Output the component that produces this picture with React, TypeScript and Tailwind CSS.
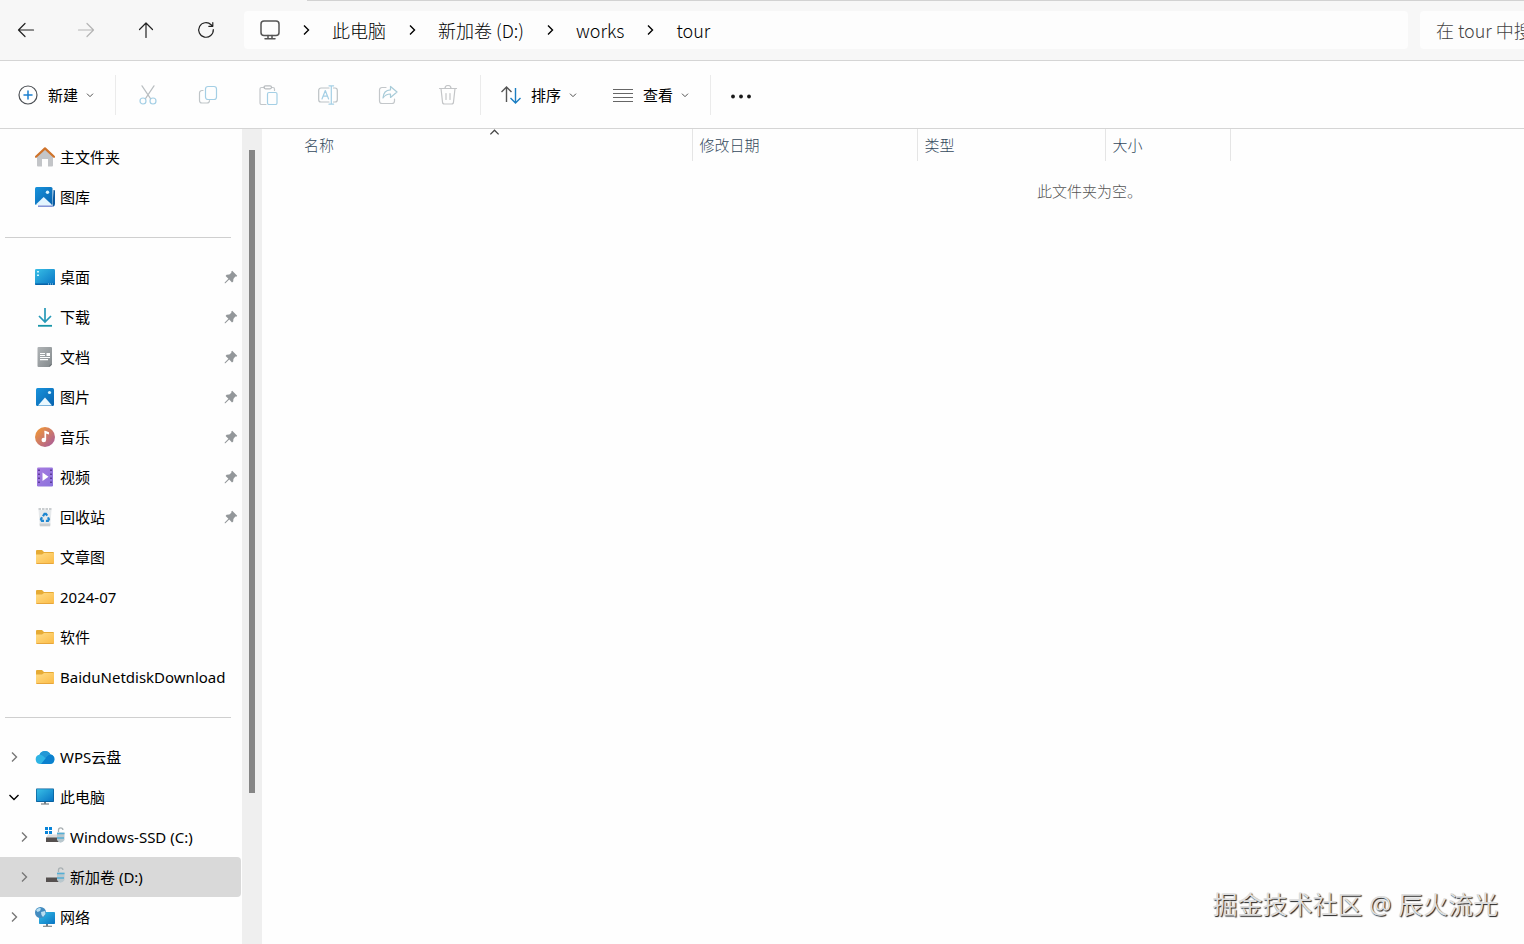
import type { ReactNode } from "react";

const Chevron = ({ dir, size = 12, className = "" }: { dir: "right" | "down" | "up"; size?: number; className?: string }) => {
  const d = { right: "M4 1.5 8.5 6 4 10.5", down: "M1.5 4 6 8.5 10.5 4", up: "M1.5 8 6 3.5 10.5 8" }[dir];
  return (
    <svg width={size} height={size} viewBox="0 0 12 12" fill="none" stroke="currentColor" strokeWidth="1.4" className={className}>
      <path d={d} />
    </svg>
  );
};

const Line = ({ children, size = 20 }: { children: ReactNode; size?: number }) => (
  <svg width={size} height={size} viewBox="0 0 20 20" fill="none" stroke="currentColor" strokeWidth="1.2" strokeLinecap="round" strokeLinejoin="round">
    {children}
  </svg>
);

const Art = ({ children }: { children: ReactNode }) => (
  <svg width="20" height="20" viewBox="0 0 20 20" className="shrink-0">
    {children}
  </svg>
);

/* Shared gradients for the sidebar icons */
const Gradients = () => (
  <svg width="0" height="0" className="absolute">
    <defs>
      <linearGradient id="blue" x1="0" y1="0" x2="1" y2="1">
        <stop offset="0" stopColor="#1893dc" />
        <stop offset="1" stopColor="#0762ae" />
      </linearGradient>
      <linearGradient id="cyan" x1="0" y1="0" x2="1" y2="1">
        <stop offset="0" stopColor="#38bfe6" />
        <stop offset="1" stopColor="#0874c4" />
      </linearGradient>
      <linearGradient id="folder" x1="0" y1="0" x2="1" y2="1">
        <stop offset="0" stopColor="#ffdc86" />
        <stop offset="1" stopColor="#fbbb45" />
      </linearGradient>
      <linearGradient id="music" x1="0" y1="0" x2="1" y2="1">
        <stop offset="0.2" stopColor="#e78f43" />
        <stop offset="0.8" stopColor="#b4658c" />
      </linearGradient>
      <linearGradient id="gray" x1="0" y1="0" x2="1" y2="1">
        <stop offset="0" stopColor="#b0b4b6" />
        <stop offset="1" stopColor="#83898c" />
      </linearGradient>
      <linearGradient id="purple" x1="0" y1="0" x2="1" y2="1">
        <stop offset="0" stopColor="#a77be0" />
        <stop offset="1" stopColor="#8a72dc" />
      </linearGradient>
    </defs>
  </svg>
);

const HomeIcon = () => (
  <Art>
    <path d="M2 9 10 2l8 7v9.5a1 1 0 0 1-1 1h-4V12H7v7.5H3a1 1 0 0 1-1-1Z" fill="#c3c5c8" />
    <path d="M1 9.8 10 1.4l9 8.4" fill="none" stroke="#cf732b" strokeWidth="2.2" strokeLinecap="round" strokeLinejoin="round" />
  </Art>
);

const GalleryIcon = () => (
  <Art>
    <path d="M18.500 3h.5a1 1 0 0 1 1 1v13a3 3 0 0 1-2 2.800h-.5Z" fill="#0b5aa0" />
    <path d="M3 19.200h14.500" stroke="#8496d8" strokeWidth="1.600" />
    <rect width="17.500" height="18" rx="1.500" fill="url(#blue)" />
    <path d="M.8 17.500 8.700 10l8 7.500q-.5.5-1 .5H2Z" fill="#e3f5ff" />
    <circle cx="12.500" cy="5.200" r="1.700" fill="#d8f4ff" />
  </Art>
);

const DesktopIcon = () => (
  <Art>
    <rect y="2" width="20" height="16" rx="1.3" fill="url(#cyan)" />
    <path d="M0 16.500h20v.3a1.200 1.200 0 0 1-1.200 1.200H1.200A1.200 1.200 0 0 1 0 16.800Z" fill="#0863a8" />
    <path d="M2 4h2v1.500H2ZM2 7.500h2V9H2Z" fill="#c9f4ff" />
    <path d="M13 17h1M15 17h1M17 17h1" stroke="#a9dcf5" />
  </Art>
);

const DownloadIcon = () => (
  <Art>
    <path d="M10 1v13.500M4 9l6 6 6-6" fill="none" stroke="#2699b8" strokeWidth="1.700" />
    <path d="M3 18.800h14" stroke="#1795a8" strokeWidth="1.800" />
  </Art>
);

const DocumentIcon = () => (
  <Art>
    <path d="M3.500 0H16q1 0 1 1v16.500L14.500 20h-11q-1 0-1-1V1q0-1 1-1Z" fill="url(#gray)" />
    <path d="M14.500 20v-1.500q0-1 1-1H17Z" fill="#686f73" />
    <path d="M5 6.500h5M5 8.500h5M5 10.500h10M5 12.700h8" stroke="#fff" strokeWidth="1.200" />
    <path d="M11.500 6H15v3h-3.500Z" fill="#fff" />
  </Art>
);

const PicturesIcon = () => (
  <Art>
    <rect x="1" y="1" width="18" height="18" rx="1.500" fill="url(#blue)" />
    <path d="M3 18.500 10 10.500l7 8Z" fill="#e9f8ff" />
    <circle cx="14.500" cy="5.500" r="1.600" fill="#d8f4ff" />
  </Art>
);

const MusicIcon = () => (
  <Art>
    <circle cx="10" cy="10" r="10" fill="url(#music)" />
    <path d="M10.300 4v9" stroke="#fff" strokeWidth="1.700" />
    <path d="M9.500 3.500 14 5.200v2.300l-4-1.200Z" fill="#fff" />
    <circle cx="8.800" cy="13" r="2.300" fill="#fff" />
  </Art>
);

const VideoIcon = () => (
  <Art>
    <rect x="2" y=".5" width="16" height="19" rx="1.200" fill="url(#purple)" />
    <path d="M4 2.500v16M16 2.500v16" stroke="#4b2b83" strokeWidth="1.500" strokeDasharray="1.500 2.500" />
    <path d="M7.500 5.500v8.500l6-4.200Z" fill="#fff" />
  </Art>
);

const RecycleIcon = () => (
  <Art>
    <path d="M3.500 3h13l-1.300 16.300H4.800Z" fill="#e6e9eb" />
    <path d="M3.500 2h13" stroke="#b9bec1" strokeWidth="1.300" strokeDasharray="2.500 1" />
    <path d="M4.600 16.500h10.800l-.3 2.800H4.900Z" fill="#c9cdd0" />
    <g fill="none" stroke="#1d86d0" strokeWidth="2.200">
      <path d="m8 9.300 1.500-2.500h1.400l1.300 1.800" />
      <path d="m13 10.400.9 1.900-.9 1.500h-2.100" />
      <path d="M9 13.800H6.900L6 12.300 7 10.300" />
    </g>
  </Art>
);

const FolderIcon = () => (
  <Art>
    <path d="M1 4q0-1 1-1h5l2 2h9q1 0 1 1v3H1Z" fill="#e6ab35" />
    <path d="M1 7.500h6L9 6h9.200q.8 0 .8.800V16q0 1-1 1H2q-1 0-1-1Z" fill="url(#folder)" />
    <path d="M1.500 16.500h17" stroke="#e7a63c" />
  </Art>
);

const CloudIcon = () => (
  <Art>
    <path d="M5 17A4.700 4.700 0 0 1 4.500 7.700 6 6 0 0 1 15.500 7.500 4.800 4.800 0 0 1 15 17Z" fill="#2fb4e4" />
    <path d="M15 17a4.800 4.800 0 0 0 .5-9.500 5 5 0 0 0-5 4L6 17Z" fill="#0b80ce" />
    <path d="M4.500 7.700A6 6 0 0 1 15.500 7.500q-3 .3-5 4-2.500-3.800-6-3.800Z" fill="#2398d6" />
  </Art>
);

const ComputerIcon = () => (
  <Art>
    <path d="M9 14h2v3H9Z" fill="#6b7b86" />
    <path d="M6 17h8" stroke="#83888b" strokeWidth="1.300" />
    <rect x="1" y="1.500" width="18" height="13.500" rx=".8" fill="#075c98" />
    <rect x="1.700" y="2.200" width="16.600" height="12" fill="url(#cyan)" />
  </Art>
);

const DriveIcon = ({ system }: { system?: boolean }) => (
  <Art>
    {system && <path d="M0 0h3v3H0ZM4 0h3v3H4ZM0 4h3v3H0ZM4 4h3v3H4Z" fill="#0884d8" />}
    <path d="M3 7.500h11l1 3.500H1Z" fill="#dcdcdc" />
    <path d="M1 10.500h13V15H1Z" fill="#55504f" />
    <path d="M13.500 5V3a2.200 2.200 0 0 1 4.400 0" fill="none" stroke="#aab1b4" strokeWidth="1.300" />
    <path d="M12 5.500h7.500V13q-1 2-4 2.800-2.500-.8-3.500-2.800Z" fill="#b9c7cd" />
    <path d="M12 6.500h7.500M12 11h7" stroke="#54aed5" strokeWidth="1.300" />
  </Art>
);

const NetworkIcon = () => (
  <Art>
    <path d="M11 16h2v3h-2Z" fill="#6b7b86" />
    <path d="M8 19.300h9" stroke="#83888b" strokeWidth="1.200" />
    <rect x="4" y="5" width="16" height="12" rx=".8" fill="url(#cyan)" />
    <circle cx="5.500" cy="5.500" r="5.500" fill="#438cc0" />
    <path d="M1 3q3-3 5-1.500L5 4 2.500 5ZM6 5l4-1 .5 3L8 10 6.500 8Z" fill="#b9dff2" />
  </Art>
);

const PinIcon = () => (
  <svg width="14" height="14" viewBox="0 0 14 14" fill="#93979a" className="ml-auto shrink-0">
    <path d="M8.200.8 13.200 5.800 12.300 6.800 11.300 6.600 9.400 8.900 9.200 11.500 8 12.400 5.200 9.600 1.400 13.300.7 13.300.7 12.600 4.400 8.800 1.600 6 2.600 4.800 5.300 4.600 7.400 2.700 7.200 1.700Z" />
  </svg>
);

type Item = {
  label: string;
  icon: ReactNode;
  pinned?: boolean;
  arrow?: "right" | "down";
  nested?: boolean;
  active?: boolean;
};

const groups: Item[][] = [
  [
    { label: "主文件夹", icon: <HomeIcon /> },
    { label: "图库", icon: <GalleryIcon /> },
  ],
  [
    { label: "桌面", icon: <DesktopIcon />, pinned: true },
    { label: "下载", icon: <DownloadIcon />, pinned: true },
    { label: "文档", icon: <DocumentIcon />, pinned: true },
    { label: "图片", icon: <PicturesIcon />, pinned: true },
    { label: "音乐", icon: <MusicIcon />, pinned: true },
    { label: "视频", icon: <VideoIcon />, pinned: true },
    { label: "回收站", icon: <RecycleIcon />, pinned: true },
    { label: "文章图", icon: <FolderIcon /> },
    { label: "2024-07", icon: <FolderIcon /> },
    { label: "软件", icon: <FolderIcon /> },
    { label: "BaiduNetdiskDownload", icon: <FolderIcon /> },
  ],
  [
    { label: "WPS云盘", icon: <CloudIcon />, arrow: "right" },
    { label: "此电脑", icon: <ComputerIcon />, arrow: "down" },
    { label: "Windows-SSD (C:)", icon: <DriveIcon system />, arrow: "right", nested: true },
    { label: "新加卷 (D:)", icon: <DriveIcon />, arrow: "right", nested: true, active: true },
    { label: "网络", icon: <NetworkIcon />, arrow: "right" },
  ],
];

const SidebarItem = ({ item }: { item: Item }) => (
  <a
    href="#"
    className={`mr-px flex h-10 items-center rounded-r-sm pr-[3px] ${item.nested ? "pl-[18px]" : "pl-2"} ${item.active ? "bg-[#d9d9d9]" : "hover:bg-gray-100"}`}
  >
    <span className="w-[27px] shrink-0">
      {item.arrow && <Chevron dir={item.arrow} className={item.arrow === "down" ? "text-black" : "text-[#777]"} />}
    </span>
    {item.icon}
    <span className="ml-[5px] whitespace-nowrap">{item.label}</span>
    {item.pinned && <PinIcon />}
  </a>
);

const navButtons = [
  { label: "后退", icon: <path d="M17.500 10H2.500M9 3.500 2.500 10 9 16.500" /> },
  { label: "前进", disabled: true, icon: <path d="M2.500 10h15M11 3.500 17.500 10 11 16.500" /> },
  { label: "向上", icon: <path d="M10 17.500V3M3.500 9.500 10 3l6.500 6.500" /> },
  { label: "刷新", icon: <path d="M17.300 9.500a7.300 7.300 0 1 1-2.200-4.800l1.500 1.400M16.800 2.500v3.800h-4" /> },
];

const tools = [
  {
    label: "剪切",
    icon: (
      <>
        <path d="m4 .8 8.700 13M16 .8l-8.700 13" stroke="#b9bec1" />
        <g stroke="#a4cfe5">
          <circle cx="5" cy="16" r="3" />
          <circle cx="15" cy="16" r="3" />
        </g>
      </>
    ),
  },
  {
    label: "复制",
    icon: (
      <>
        <path d="M5 5.500H4a2.500 2.500 0 0 0-2.500 2.500v7.500A2.500 2.500 0 0 0 4 18h5a2.500 2.500 0 0 0 2.500-2.500" stroke="#bfc5c8" />
        <rect x="7.500" y="1.500" width="11" height="13" rx="2.500" stroke="#a4cfe5" />
      </>
    ),
  },
  {
    label: "粘贴",
    icon: (
      <>
        <path d="M6.500 2.500h-3A1.500 1.500 0 0 0 2 4v14a1.500 1.500 0 0 0 1.500 1.500H8M13.500 2.500H15A1.500 1.500 0 0 1 16.500 4v1.500" stroke="#c3c7ca" />
        <rect x="6" y=".8" width="7.500" height="3" rx="1.500" stroke="#b8bcbf" />
        <rect x="9.500" y="7.500" width="9.500" height="12" rx="1.500" stroke="#a4cfe5" />
      </>
    ),
  },
  {
    label: "重命名",
    icon: (
      <>
        <path d="M11 3H3a2.300 2.300 0 0 0-2.300 2.300v9.400A2.300 2.300 0 0 0 3 17h8M15.500 3H17a2.300 2.300 0 0 1 2.300 2.300v9.400A2.300 2.300 0 0 1 17 17h-1.500" stroke="#bcc2c5" />
        <path d="M13.300.8v18.400M11 .8h4.600M11 19.200h4.600M4 14 7.300 5.500 10.600 14M5.200 11.200h4.200" stroke="#a4cfe5" />
      </>
    ),
  },
  {
    label: "共享",
    icon: (
      <>
        <path d="M8 2.500H4A2.500 2.500 0 0 0 1.500 5v11A2.500 2.500 0 0 0 4 18.500h10a2.500 2.500 0 0 0 2.500-2.500v-2" stroke="#c3c7ca" />
        <path d="M12.500 1.500v3.300C8 5 5.300 8 5 13c2-3 4.300-4 7.500-4v3.500L19 7Z" stroke="#a8cbd8" />
      </>
    ),
  },
  {
    label: "删除",
    icon: (
      <path d="M1.500 3.500h17M7 3.500a3 3 0 0 1 6 0M3 3.500 4.500 17a2 2 0 0 0 2 2h7a2 2 0 0 0 2-2L17 3.500M8 8.500v6M12 8.500v6" stroke="#c3c5c7" />
    ),
  },
];

const Separator = () => <div className="h-10 w-px shrink-0 bg-[#ebebeb]" />;

const crumbs = ["此电脑", "新加卷 (D:)", "works", "tour"];

const TopBar = () => (
  <header className="flex h-[61px] items-center border-b border-[#d5d5d5] bg-[#f7f7f7] font-['Noto_Sans_CJK_SC',sans-serif]">
    <nav className="-ml-1 flex shrink-0">
      {navButtons.map((b) => (
        <button key={b.label} aria-label={b.label} disabled={b.disabled} className="flex w-[60px] justify-center text-[#222] disabled:text-[#b5b5b5]">
          <Line>{b.icon}</Line>
        </button>
      ))}
    </nav>
    <div className="ml-2 flex h-[38px] min-w-0 flex-1 items-center rounded bg-[#fdfdfd] pl-4 text-lg font-light text-black">
      <span className="text-[#555]">
        <Line>
          <rect x="1" y="1" width="18" height="14.500" rx="3" strokeWidth="1.500" />
          <path d="M8 15.500v3M12 15.500v3M5 18.800h10" strokeWidth="1.500" />
        </Line>
      </span>
      {crumbs.map((c) => (
        <span key={c} className="flex items-center whitespace-nowrap">
          <span className="flex w-[52px] justify-center">
            <Chevron dir="right" />
          </span>
          <a href="#">{c}</a>
        </span>
      ))}
    </div>
    <input
      type="text"
      aria-label="搜索"
      placeholder="在 tour 中搜索"
      className="ml-3 h-[38px] w-[104px] shrink-0 rounded-l bg-[#fdfdfd] pl-4 text-lg font-light placeholder:text-[#444] focus:outline-none"
    />
  </header>
);

const Toolbar = () => (
  <div className="flex h-[68px] items-center border-b border-[#d5d5d5] bg-[#fefefe]">
    <button className="flex w-[115px] shrink-0 items-center pl-[18px]">
      <Line>
        <circle cx="10" cy="10" r="9" stroke="#4c5055" />
        <path d="M10 6v8M6 10h8" stroke="#1a7fd0" strokeWidth="1.500" />
      </Line>
      <span className="ml-[10px]">新建</span>
      <Chevron dir="down" size={8} className="ml-2 text-[#444]" />
    </button>
    <Separator />
    <div className="mx-[2px] flex shrink-0">
      {tools.map((t) => (
        <button key={t.label} aria-label={t.label} disabled className="flex w-[60px] justify-center">
          <Line>{t.icon}</Line>
        </button>
      ))}
    </div>
    <Separator />
    <div className="flex w-[229px] shrink-0 items-center gap-9 pl-5">
      <button className="flex items-center">
        <svg width="20" height="20" viewBox="0 0 20 20" fill="none" strokeWidth="1.400">
          <path d="M5.500 17V2M.5 7l5-5 5 5" stroke="#555" />
          <path d="M14.500 3v15M9.500 13l5 5 5-5" stroke="#1b7ec2" />
        </svg>
        <span className="ml-[10px]">排序</span>
        <Chevron dir="down" size={8} className="ml-2 text-[#444]" />
      </button>
      <button className="flex items-center">
        <svg width="20" height="20" viewBox="0 0 20 20" stroke="#666">
          <path d="M0 4.500h20M0 8.500h20M0 12.500h20M0 16.500h20" />
        </svg>
        <span className="ml-[10px]">查看</span>
        <Chevron dir="down" size={8} className="ml-2 text-[#444]" />
      </button>
    </div>
    <Separator />
    <button aria-label="更多" className="flex w-[60px] shrink-0 justify-center">
      <svg width="20" height="20" viewBox="0 0 20 20" fill="#1a1a1a">
        <circle cx="2" cy="11.500" r="1.900" />
        <circle cx="10" cy="11.500" r="1.900" />
        <circle cx="18" cy="11.500" r="1.900" />
      </svg>
    </button>
  </div>
);

const FileList = () => (
  <table className="w-full table-fixed text-left font-['Noto_Sans_CJK_SC',sans-serif] font-light">
    <thead className="text-[#33495c]">
      <tr className="h-8">
        <th className="relative w-[430px] border-r border-[#e5e5e5] pl-[42px] font-light">
          名称
          <Chevron dir="up" size={11} className="absolute -top-[2px] left-[227px] text-[#444]" />
        </th>
        <th className="w-[225px] border-r border-[#e5e5e5] pl-[7px] font-light">修改日期</th>
        <th className="w-[188px] border-r border-[#e5e5e5] pl-[7px] font-light">类型</th>
        <th className="w-[125px] border-r border-[#e5e5e5] pl-[7px] font-light">大小</th>
        <th />
      </tr>
    </thead>
    <tbody>
      <tr>
        <td colSpan={5} className="pt-[18px] pl-[775px] whitespace-nowrap text-[#555]">
          此文件夹为空。
        </td>
      </tr>
    </tbody>
  </table>
);

export default function App() {
  return (
    <div className="relative flex h-screen flex-col overflow-hidden bg-[#fefefe] font-['Noto_Sans','Noto_Sans_CJK_SC',sans-serif] text-[15px] leading-6 text-black">
      <Gradients />
      {/* Edge of the tab strip */}
      <div className="absolute top-0 right-0 left-[307px] h-px bg-[#d2d2d2]" />
      <TopBar />
      <Toolbar />
      <div className="flex min-h-0 flex-1">
        <aside className="w-[242px] shrink-0 overflow-hidden pt-2">
          {groups.map((group, i) => (
            <div key={i}>
              {i > 0 && <hr className="mt-5 mr-[11px] mb-[19px] ml-[5px] border-[#cfcfcf]" />}
              {group.map((item) => (
                <SidebarItem key={item.label} item={item} />
              ))}
            </div>
          ))}
        </aside>
        {/* Scroll bar */}
        <div className="flex w-5 shrink-0 justify-center bg-[#efefef] pt-[21px]">
          <div className="h-[81%] w-[6px] bg-[#858585]" />
        </div>
        <main className="min-w-0 flex-1">
          <FileList />
        </main>
      </div>
      <p className="absolute right-[26px] bottom-[22px] text-[25px] leading-9 text-[#dedede] [text-shadow:1px_1px_1px_#222]">掘金技术社区 @ 辰火流光</p>
    </div>
  );
}
